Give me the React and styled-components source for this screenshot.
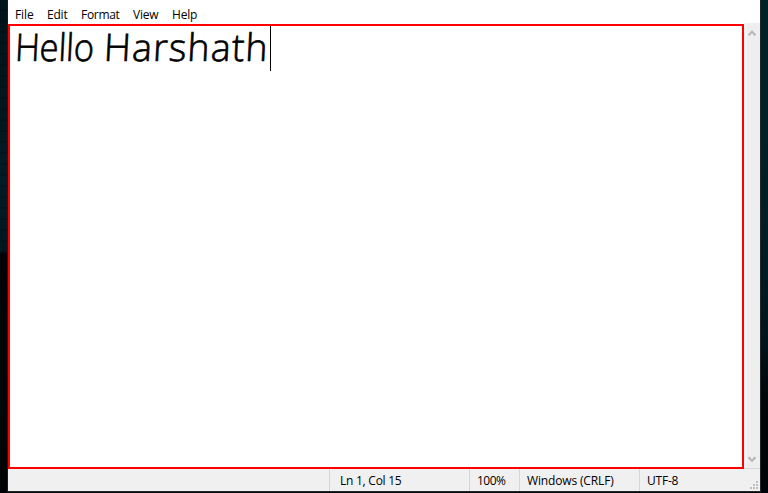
import React from "react";
import styled, { createGlobalStyle } from "styled-components";

const GlobalStyle = createGlobalStyle`
  * { box-sizing: border-box; }
  body { margin: 0; overflow: hidden; background: #00080c; }
`;

const Desktop = styled.div`
  width: 768px;
  height: 493px;
  padding: 0 8px 2px;
  background:
    linear-gradient(#25282a, #25282a) 7px 491px / 754px 1px no-repeat,
    linear-gradient(#202527, #202527) 760px 0 / 1px 491px no-repeat,
    linear-gradient(#161e21, #161e21) 7px 0 / 1px 491px no-repeat,
    repeating-linear-gradient(transparent 0 9px, rgba(0, 0, 0, 0.22) 9px 11px) 0 0 / 8px 253px no-repeat,
    linear-gradient(#02141b 0, #02151c 80px, #011c26 180px, #001720 252px, #000305 254px, #000608 340px, #000708 410px, #000203 493px) 0 0 / 8px 493px no-repeat,
    linear-gradient(#002126 0, #002126 130px, #001c23 270px, #00151b 340px, #000609 400px, #000408 493px) 760px 0 / 8px 493px no-repeat,
    #00080c;
`;

const Window = styled.main`
  display: flex;
  flex-direction: column;
  height: 491px;
  background: #fff;
  color: #000;
  font: 12px/16px "Open Sans", "Noto Sans", sans-serif;
`;

const MenuBar = styled.nav`
  display: flex;
  height: 23px;
  padding: 7px 0 0 7px;
`;

const MenuItem = styled.span`
  flex: none;
  width: ${({ $width }) => $width}px;
  letter-spacing: ${({ $tracking }) => $tracking || 0}px;
  white-space: nowrap;
`;

const Body = styled.div`
  display: flex;
  height: 446px;
`;

const Editor = styled.section`
  width: 736px;
  height: 445px;
  margin-top: 1px;
  border: 2px solid #f00;
  padding: 0 0 0 5px;
  display: flex;
  align-items: flex-start;
`;

const Handwriting = styled.span`
  flex: none;
  width: ${({ $width }) => $width}px;
  height: 45px;
  font: 300 38px/40px "Ink Free", "Open Sans", sans-serif;
  letter-spacing: ${({ $tracking }) => $tracking}px;
  white-space: nowrap;
  -webkit-text-stroke: 0.7px #000;
  transform: scaleX(${({ $stretch }) => $stretch}) skewX(-3deg);
  transform-origin: left;
`;

const Caret = styled.i`
  width: 1px;
  height: 45px;
  background: #000;
`;

const ScrollBar = styled.aside`
  display: flex;
  flex-direction: column;
  justify-content: space-between;
  align-items: center;
  width: 16px;
  padding: 7px 0 5px;
  background: linear-gradient(90deg, #f3f3f3 3px, #eee 3px);
  border-bottom: 1px solid #d7d7d7;
`;

const StatusBar = styled.footer`
  display: flex;
  height: 22px;
  background: #f0f0f0;
`;

const StatusCell = styled.div`
  flex: none;
  width: ${({ $width }) => $width}px;
  padding: 4px 0 0 ${({ $pad }) => $pad || 7}px;
  border-left: ${({ $first }) => ($first ? "0" : "1px solid #d7d7d7")};
  letter-spacing: ${({ $tracking }) => $tracking || 0}px;
  white-space: nowrap;
`;

const Grip = styled.svg`
  align-self: flex-end;
  margin: 0 2px 2px auto;
`;

function Arrow({ down }) {
  return (
    <svg width="8" height="7" viewBox="0 0 8 7">
      <path
        d={down ? "M.5 1.2 4 4.7 7.5 1.2" : "M.5 5.3 4 1.8 7.5 5.3"}
        fill="none"
        stroke="#b8b8b8"
        strokeWidth="2.3"
      />
    </svg>
  );
}

const menus = [
  ["File", 32, -0.1],
  ["Edit", 34, -0.2],
  ["Format", 52, -0.3],
  ["View", 39, -0.2],
  ["Help", 40, -0.2],
];

const dots = [[6, 0], [3, 3], [6, 3], [0, 6], [3, 6], [6, 6]];

export default function App() {
  return (
    <Desktop>
      <GlobalStyle />
      <Window>
        <MenuBar>
          {menus.map(([label, width, tracking]) => (
            <MenuItem key={label} $width={width} $tracking={tracking}>{label}</MenuItem>
          ))}
        </MenuBar>
        <Body>
          <Editor>
            <Handwriting $width={89} $tracking={-0.2} $stretch={0.91}>Hello</Handwriting>
            <Handwriting $width={166} $tracking={1.1} $stretch={0.99}>Harshath</Handwriting>
            <Caret />
          </Editor>
          <ScrollBar>
            <Arrow />
            <Arrow down />
          </ScrollBar>
        </Body>
        <StatusBar>
          <StatusCell $first $width={321} />
          <StatusCell $width={140} $pad={10} $tracking={-0.25}>Ln 1, Col 15</StatusCell>
          <StatusCell $width={50} $tracking={-0.5}>100%</StatusCell>
          <StatusCell $width={120} $tracking={-0.15}>Windows (CRLF)</StatusCell>
          <StatusCell $width={100} $tracking={-0.2}>UTF-8</StatusCell>
          <Grip width="8" height="8" viewBox="0 0 8 8">
            {dots.map(([x, y]) => (
              <rect key={`${x}-${y}`} x={x} y={y} width="2" height="2" fill="#bfbfbf" />
            ))}
          </Grip>
        </StatusBar>
      </Window>
    </Desktop>
  );
}
